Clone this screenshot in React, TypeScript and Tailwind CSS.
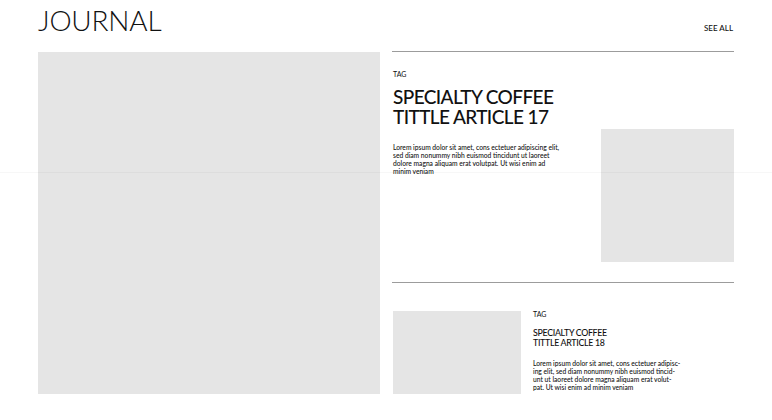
const body1 = [
  "Lorem ipsum dolor sit amet, cons ectetuer adipiscing elit,",
  "sed diam nonummy nibh euismod tincidunt ut laoreet",
  "dolore magna aliquam erat volutpat. Ut wisi enim ad",
  "minim veniam",
];

const body2 = [
  "Lorem ipsum dolor sit amet, cons ectetuer adipisc-",
  "ing elit, sed diam nonummy nibh euismod tincid-",
  "unt ut laoreet dolore magna aliquam erat volut-",
  "pat. Ut wisi enim ad minim veniam",
];

function Lines({ lines }: { lines: string[] }) {
  return (
    <>
      {lines.map((line) => (
        <span key={line} className="block whitespace-nowrap">
          {line}
        </span>
      ))}
    </>
  );
}

export default function App() {
  return (
    <div className="relative h-[420px] w-[772px] overflow-hidden bg-white font-['Lato','Liberation_Sans',sans-serif] text-[#111]">
      <header className="flex h-[51px] items-start justify-between px-[38px]">
        <h1 className="mt-[3px] text-[28px] font-light leading-[34px] tracking-[-0.2px]">JOURNAL</h1>
        <a className="mr-[1px] mt-[22px] text-[8px] font-medium leading-[12px]">SEE ALL</a>
      </header>

      <main className="grid grid-cols-2 gap-[12px] px-[38px]">
        <div className="mt-[1px] h-[342px] bg-[#e5e5e5]" />

        <div className="flex h-[343px] flex-col overflow-hidden">
          <article className="flex h-[231px] shrink-0 justify-between border-t border-[#9c9c9c]">
            <div className="pl-px pt-[19px]">
              <p className="text-[7px] leading-[7px]">TAG</p>
              <h2 className="mt-[9px] text-[19px] font-medium leading-[20px] tracking-[-0.6px]">
                SPECIALTY COFFEE
                <br />
                TITTLE ARTICLE 17
              </h2>
              <p className="mt-[16px] text-[6.7px] font-medium leading-[8px]">
                <Lines lines={body1} />
              </p>
            </div>
            <div className="mt-[77px] h-[133px] w-[133px] bg-[#e5e5e5]" />
          </article>

          <article className="flex shrink-0 gap-[12px] border-t border-[#9c9c9c] pt-[28px]">
            <div className="ml-px h-[128px] w-[128px] shrink-0 bg-[#e5e5e5]" />
            <div>
              <p className="text-[7px] leading-[7px]">TAG</p>
              <h3 className="mt-[10px] text-[8.8px] font-medium leading-[10px] tracking-[-0.3px]">
                SPECIALTY COFFEE
                <br />
                TITTLE ARTICLE 18
              </h3>
              <p className="mt-[11px] text-[6.7px] font-medium leading-[8px]">
                <Lines lines={body2} />
              </p>
            </div>
          </article>
        </div>
      </main>

      <div className="pointer-events-none absolute left-0 right-0 top-[172px] h-px bg-black/[0.03]" />
    </div>
  );
}
